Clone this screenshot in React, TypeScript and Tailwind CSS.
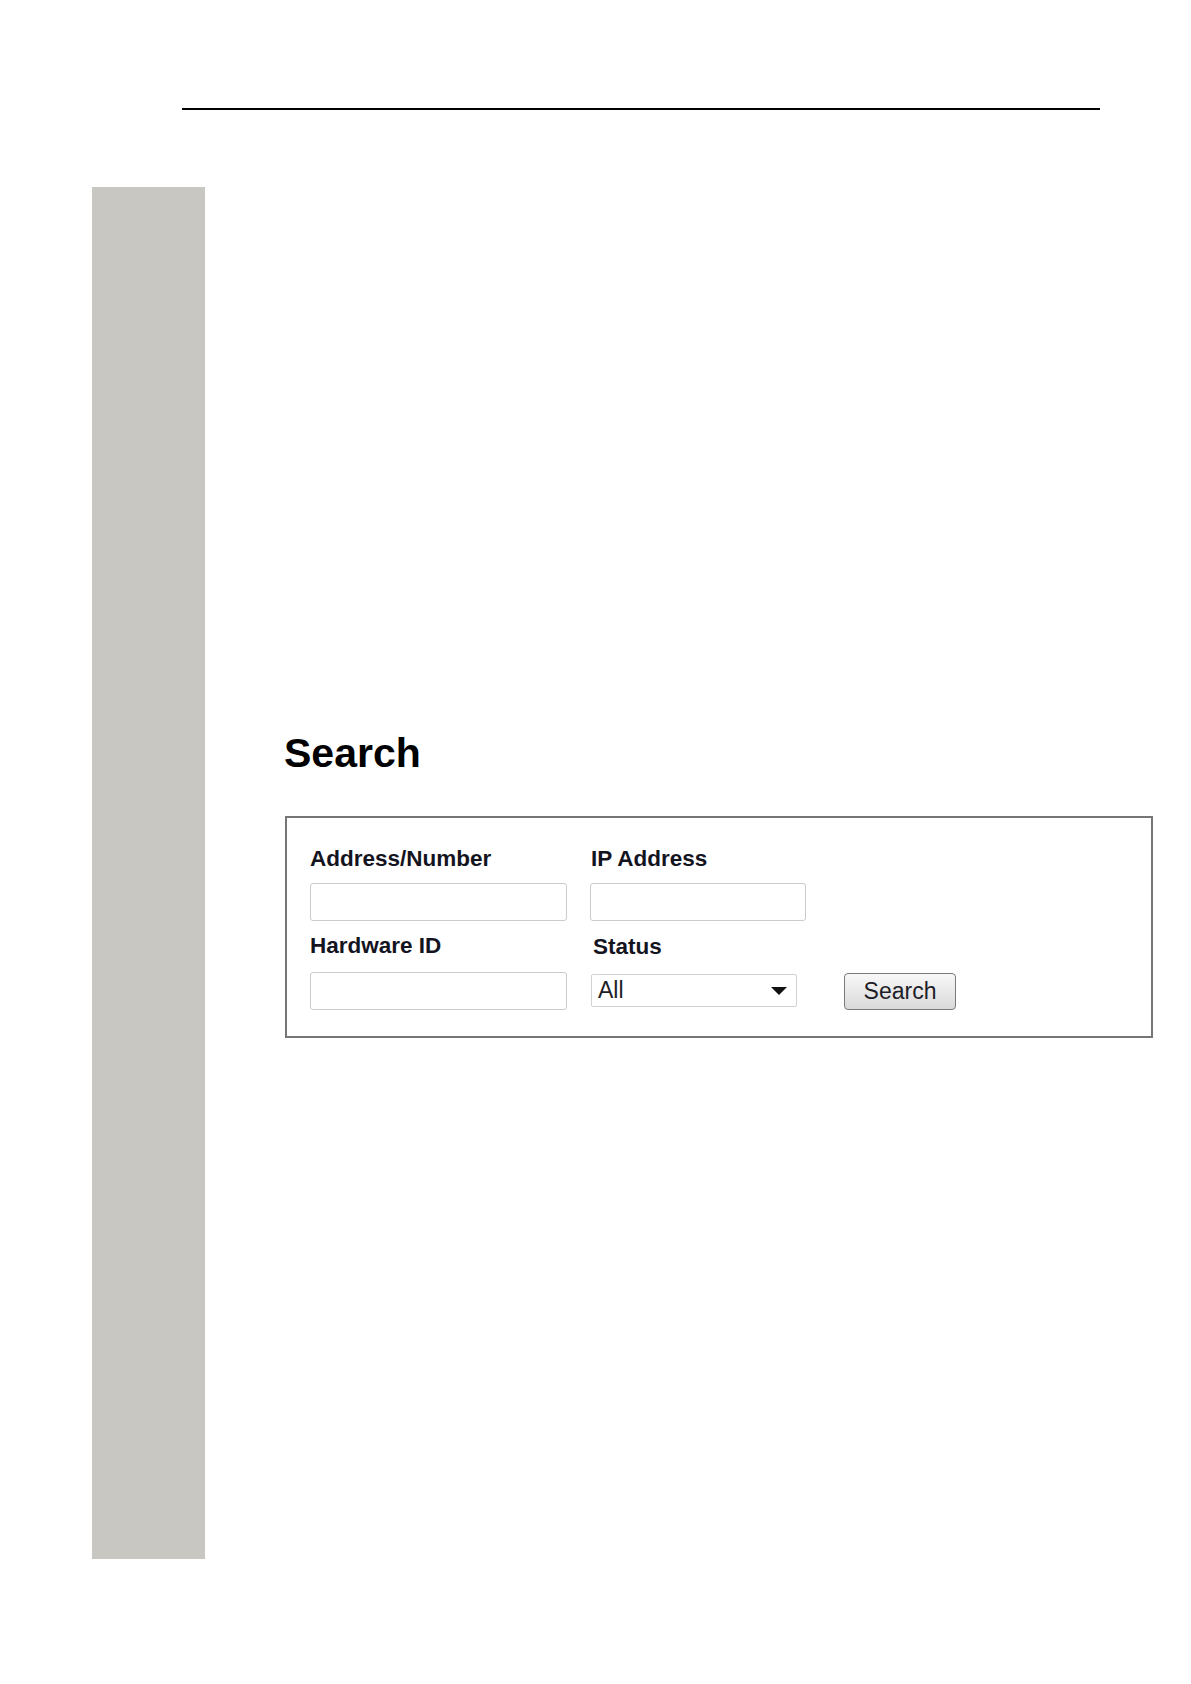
import React from 'react';

const font = { fontFamily: '"Liberation Sans", Arial, sans-serif' };

const Label = ({ children, className = '' }: { children: React.ReactNode; className?: string }) => (
  <div className={`text-[22.5px] leading-[22px] font-bold text-[#14141f] ${className}`}>{children}</div>
);

const TextBox = ({ width, className = '' }: { width: string; className?: string }) => (
  <div className={`${width} h-[38px] bg-white border-[1.5px] border-[#cbcbcb] rounded-[3px] ${className}`} />
);

const App = () => {
  return (
    <div className="w-[1191px] h-[1684px] bg-white" style={font}>
      {/* top rule */}
      <div className="pt-[108px] pl-[182px]">
        <div className="w-[918px] h-[2px] bg-black" />
      </div>

      <div className="flex mt-[77px]">
        {/* gray margin strip */}
        <div className="ml-[92px] w-[113px] h-[1372px] bg-[#c8c7c1] shrink-0" />

        {/* content */}
        <div className="ml-[79px] pt-[546px]">
          <h1 className="text-[41px] leading-[41px] font-bold text-black">Search</h1>

          <div className="mt-[42px] ml-[1px] w-[868px] h-[222px] border-2 border-[#767676] pl-[23px] pt-[30px]">
            {/* row 1 */}
            <div className="flex">
              <div className="w-[257px]">
                <Label>Address/Number</Label>
                <TextBox width="w-[257px]" className="mt-[13px]" />
              </div>
              <div className="ml-[23px]">
                <Label className="pl-[1px]">IP Address</Label>
                <TextBox width="w-[216px]" className="mt-[13px]" />
              </div>
            </div>

            {/* row 2 */}
            <div className="flex items-end mt-[14px]">
              <div className="w-[257px]">
                <Label>Hardware ID</Label>
                <TextBox width="w-[257px]" className="mt-[15px]" />
              </div>
              <div className="ml-[24px]">
                <Label className="pl-[2px]">Status</Label>
                <div className="mt-[16px] mb-[3px] w-[206px] h-[33px] bg-white border-[1.5px] border-[#d2d2d2] rounded-[2px] flex items-center justify-between pl-[6px] pr-[9px]">
                  <span className="text-[23px] leading-[23px] text-[#1e1e28]">All</span>
                  <svg width="16" height="8" viewBox="0 0 16 8">
                    <path d="M0 0 H16 L8 8 Z" fill="#111" />
                  </svg>
                </div>
              </div>
              <button className="ml-[47px] w-[112px] h-[37px] border-[1.5px] border-[#7a7a7a] rounded-[4px] bg-gradient-to-b from-[#f8f8f8] to-[#d9d9d9] text-[23px] leading-[23px] text-[#1e1e28] flex items-center justify-center">
                Search
              </button>
            </div>
          </div>
        </div>
      </div>
    </div>
  );
};

export default App;
